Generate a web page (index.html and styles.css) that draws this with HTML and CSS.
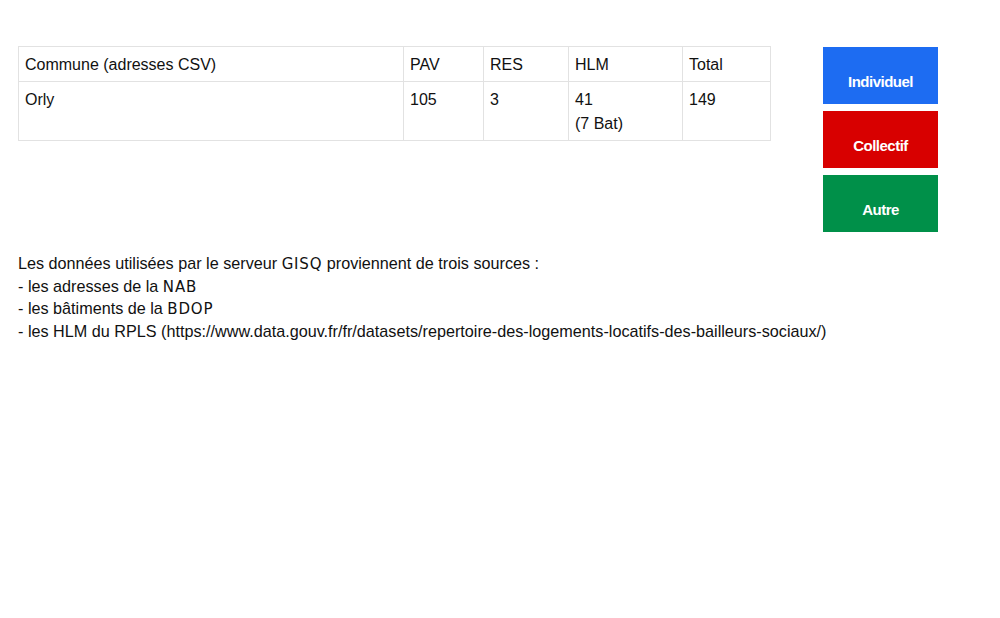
FILE: index.html
```html
<!DOCTYPE html>
<html lang="fr">
<head>
<meta charset="utf-8">
<title>GISQ</title>
<link rel="stylesheet" href="styles.css">
</head>
<body>
<div class="page">
  <div class="top">
    <table class="stats">
      <colgroup>
        <col class="c1"><col class="c2"><col class="c3"><col class="c4"><col class="c5">
      </colgroup>
      <thead>
        <tr><th>Commune (adresses CSV)</th><th>PAV</th><th>RES</th><th>HLM</th><th>Total</th></tr>
      </thead>
      <tbody>
        <tr><td>Orly</td><td>105</td><td>3</td><td>41<br>(7 Bat)</td><td>149</td></tr>
      </tbody>
    </table>
    <div class="legend">
      <div class="btn blue">Individuel</div>
      <div class="btn red">Collectif</div>
      <div class="btn green">Autre</div>
    </div>
  </div>
  <div class="info">
    <p>Les données utilisées par le serveur <span class="alt">GISQ</span> proviennent de trois sources :</p>
    <p>- les adresses de la <span class="alt">NAB</span></p>
    <p>- les bâtiments de la <span class="alt">BDOP</span></p>
    <p>- les HLM du RPLS (https://www.data.gouv.fr/fr/datasets/repertoire-des-logements-locatifs-des-bailleurs-sociaux/)</p>
  </div>
</div>
</body>
</html>
```

FILE: styles.css
```css
html, body {
  margin: 0;
  padding: 0;
  background: #fff;
}
body {
  font-family: "Liberation Sans", Arial, sans-serif;
  color: #111;
}
.page {
  padding: 46px 18px 0 18px;
}
.top {
  display: flex;
  align-items: flex-start;
  gap: 52px;
}
.stats {
  border-collapse: collapse;
  width: 752px;
  table-layout: fixed;
  font-size: 16px;
  line-height: 24px;
}
.c1 { width: 385px; }
.c2 { width: 80px; }
.c3 { width: 85px; }
.c4 { width: 114px; }
.c5 { width: 88px; }
.stats th, .stats td {
  border: 1px solid #e2e2e2;
  padding: 6px 6px 4px 6px;
  text-align: left;
  vertical-align: top;
  font-weight: normal;
}
.legend {
  display: flex;
  flex-direction: column;
  gap: 7px;
  margin-top: 1px;
}
.btn {
  width: 115px;
  height: 57px;
  box-sizing: border-box;
  padding-top: 26px;
  text-align: center;
  color: #fff;
  font-size: 15px;
  font-weight: bold;
  line-height: 18px;
  letter-spacing: -0.5px;
}
.blue { background: #1d6cf2; }
.red { background: #d80000; }
.green { background: #009049; }
.info {
  margin-top: 20px;
  font-size: 16.2px;
  line-height: 22.7px;
}
.info p {
  margin: 0;
  height: 22.7px;
}
.alt {
  font-family: "DejaVu Sans", Verdana, sans-serif;
  font-size: 15px;
  letter-spacing: 0.8px;
  line-height: 0;
}
```
